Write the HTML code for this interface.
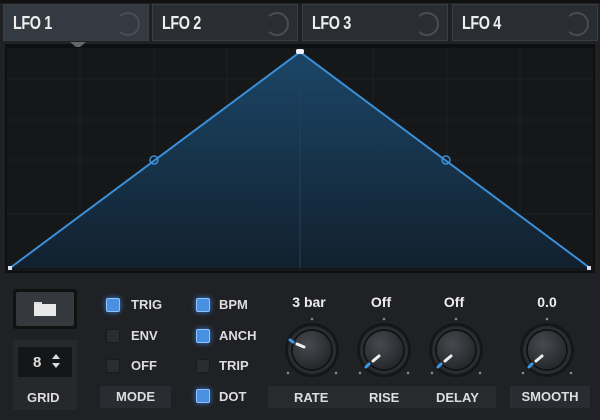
<!DOCTYPE html>
<html><head><style>
body{margin:0;width:600px;height:420px;background:#1f2124;font-family:"Liberation Sans",sans-serif;overflow:hidden;position:relative}
.a{position:absolute}
.tab{position:absolute;top:4px;height:37px;width:146px;background:#2a2d31;border:1px solid #3a3e43;box-sizing:border-box;color:#eee;font-weight:bold;font-size:18px;line-height:36px;padding-left:9px}
.tab span{display:inline-block;transform:scaleX(0.8);transform-origin:left center;letter-spacing:-0.5px}
.tab.on{background:#343a42}
.tab i{position:absolute;right:8px;top:7px;width:20px;height:20px;border:2px solid #4a4e53;border-radius:50%;border-left-color:transparent}
.lbl{position:absolute;color:#ddd;font-weight:bold;font-size:13px}
.box{position:absolute;background:#292c30;color:#ddd;font-weight:bold;font-size:12px;text-align:center;line-height:21px}
.cb{position:absolute;width:14px;height:14px;border-radius:2px}
.cb.on{background:#4a90e0;box-shadow:0 0 6px #3b7fd0;border:1px solid #8fc0ff;box-sizing:border-box}
.cb.off{background:#2a2c2f;border:1px solid #1a1b1d;box-sizing:border-box}
.val{position:absolute;color:#eee;font-weight:bold;font-size:13px;text-align:center;width:60px}
</style></head><body>
<div class="a" style="left:0;top:0;width:600px;height:3px;background:#111"></div>
<div class="tab on" style="left:3px"><span>LFO 1</span><i></i></div>
<div class="tab" style="left:152px"><span>LFO 2</span><i></i></div>
<div class="tab" style="left:302px"><span>LFO 3</span><i></i></div>
<div class="tab" style="left:452px"><span>LFO 4</span><i></i></div>
<svg class="a" style="left:0;top:0" width="600" height="280">
<defs><linearGradient id="g" x1="0" y1="0" x2="0" y2="1"><stop offset="0" stop-color="#1b4668"/><stop offset="1" stop-color="#12202e"/></linearGradient></defs>
<rect x="5" y="44" width="590" height="229" fill="#0e0f11"/>
<rect x="7" y="48" width="586" height="223" fill="#161719"/>
<g stroke="#1d1f22" stroke-width="1">
<line x1="80" y1="48" x2="80" y2="271"/><line x1="154" y1="48" x2="154" y2="271"/><line x1="227" y1="48" x2="227" y2="271"/><line x1="300" y1="48" x2="300" y2="271"/><line x1="373" y1="48" x2="373" y2="271"/><line x1="447" y1="48" x2="447" y2="271"/><line x1="520" y1="48" x2="520" y2="271"/>
<line x1="7" y1="79" x2="593" y2="79"/><line x1="7" y1="120" x2="593" y2="120"/><line x1="7" y1="160" x2="593" y2="160"/><line x1="7" y1="214" x2="593" y2="214"/>
</g>
<polygon points="10,268 300,52 590,268" fill="url(#g)"/>
<line x1="300" y1="52" x2="300" y2="268" stroke="#24405a" stroke-width="1"/>
<polyline points="10,268 300,52 590,268" fill="none" stroke="#3b8fd8" stroke-width="2"/>
<circle cx="154" cy="160" r="4" fill="none" stroke="#3b8fd8" stroke-width="1.5"/>
<circle cx="446" cy="160" r="4" fill="none" stroke="#3b8fd8" stroke-width="1.5"/>
<rect x="296" y="49" width="8" height="5" rx="2" fill="#eef4ff"/>
<rect x="8" y="266" width="4" height="4" fill="#dde"/><rect x="587" y="266" width="4" height="4" fill="#dde"/>
<path d="M70 42 L86 42 L80 47 L76 47 Z" fill="#666"/>
</svg>
<div class="a" style="left:13px;top:289px;width:64px;height:40px;background:#111;border-radius:3px"></div>
<div class="a" style="left:16px;top:292px;width:58px;height:34px;background:#35383c;border-radius:2px"></div>
<div class="a" style="left:34px;top:302px;width:8px;height:3px;background:#ddd"></div>
<div class="a" style="left:34px;top:304px;width:22px;height:12px;background:#e8e8e8"></div>
<div class="a" style="left:13px;top:340px;width:64px;height:70px;background:#26282b"></div>
<div class="a" style="left:18px;top:347px;width:54px;height:30px;background:#151618"></div>
<div class="lbl" style="left:33px;top:354px;font-size:15px">8</div>
<svg class="a" style="left:51px;top:353px" width="10" height="16"><path d="M1 6 L5 1 L9 6Z M1 10 L5 15 L9 10Z" fill="#ddd"/></svg>
<div class="lbl" style="left:27px;top:390px">GRID</div>
<div class="cb on" style="left:106px;top:298px"></div><div class="lbl" style="left:131px;top:297px">TRIG</div>
<div class="cb off" style="left:106px;top:329px"></div><div class="lbl" style="left:131px;top:328px">ENV</div>
<div class="cb off" style="left:106px;top:359px"></div><div class="lbl" style="left:131px;top:358px">OFF</div>
<div class="box" style="left:100px;top:386px;width:71px;height:22px;font-size:13px">MODE</div>
<div class="cb on" style="left:196px;top:298px"></div><div class="lbl" style="left:219px;top:297px">BPM</div>
<div class="cb on" style="left:196px;top:329px"></div><div class="lbl" style="left:219px;top:328px">ANCH</div>
<div class="cb off" style="left:196px;top:359px"></div><div class="lbl" style="left:219px;top:358px">TRIP</div>
<div class="cb on" style="left:196px;top:389px"></div><div class="lbl" style="left:219px;top:389px">DOT</div>
<div class="box" style="left:268px;top:386px;width:228px;height:22px;background:#282b2e"></div>
<div class="lbl" style="left:294px;top:390px">RATE</div>
<div class="lbl" style="left:369px;top:390px">RISE</div>
<div class="lbl" style="left:436px;top:390px">DELAY</div>
<div class="box" style="left:510px;top:386px;width:80px;height:22px;font-size:13px">SMOOTH</div>
<div class="val" style="left:279px;top:294px;font-size:14px">3 bar</div>
<div class="val" style="left:351px;top:294px;font-size:14px">Off</div>
<div class="val" style="left:424px;top:294px;font-size:14px">Off</div>
<div class="val" style="left:517px;top:294px;font-size:14px">0.0</div>
<svg class="a" style="left:270px;top:310px" width="330" height="75">
<defs><radialGradient id="k" cx="0.4" cy="0.35" r="0.7"><stop offset="0" stop-color="#464a4f"/><stop offset="1" stop-color="#222427"/></radialGradient></defs>
<g transform="translate(42,40)"><circle r="27" fill="#151618"/><circle r="24" fill="#2a2c2f"/><circle r="20" fill="url(#k)" stroke="#0e0f10" stroke-width="1.5"/><circle cx="0" cy="-31" r="1.3" fill="#888"/><circle cx="-24" cy="23" r="1.3" fill="#888"/><circle cx="24" cy="23" r="1.3" fill="#888"/><line x1="-15" y1="-6" x2="-8" y2="-3" stroke="#eee" stroke-width="3" stroke-linecap="round"/><line x1="-22" y1="-10" x2="-19" y2="-8" stroke="#3b9be8" stroke-width="3" stroke-linecap="round"/></g>
<g transform="translate(114,40)"><circle r="27" fill="#151618"/><circle r="24" fill="#2a2c2f"/><circle r="20" fill="url(#k)" stroke="#0e0f10" stroke-width="1.5"/><circle cx="0" cy="-31" r="1.3" fill="#888"/><circle cx="-24" cy="23" r="1.3" fill="#888"/><circle cx="24" cy="23" r="1.3" fill="#888"/><line x1="-11" y1="11" x2="-5" y2="6" stroke="#eee" stroke-width="3" stroke-linecap="round"/><line x1="-18" y1="17" x2="-15" y2="14" stroke="#3b9be8" stroke-width="3" stroke-linecap="round"/></g>
<g transform="translate(186,40)"><circle r="27" fill="#151618"/><circle r="24" fill="#2a2c2f"/><circle r="20" fill="url(#k)" stroke="#0e0f10" stroke-width="1.5"/><circle cx="0" cy="-31" r="1.3" fill="#888"/><circle cx="-24" cy="23" r="1.3" fill="#888"/><circle cx="24" cy="23" r="1.3" fill="#888"/><line x1="-11" y1="11" x2="-5" y2="6" stroke="#eee" stroke-width="3" stroke-linecap="round"/><line x1="-18" y1="17" x2="-15" y2="14" stroke="#3b9be8" stroke-width="3" stroke-linecap="round"/></g>
<g transform="translate(277,40)"><circle r="27" fill="#151618"/><circle r="24" fill="#2a2c2f"/><circle r="20" fill="url(#k)" stroke="#0e0f10" stroke-width="1.5"/><circle cx="0" cy="-31" r="1.3" fill="#888"/><circle cx="-24" cy="23" r="1.3" fill="#888"/><circle cx="24" cy="23" r="1.3" fill="#888"/><line x1="-11" y1="11" x2="-5" y2="6" stroke="#eee" stroke-width="3" stroke-linecap="round"/><line x1="-18" y1="17" x2="-15" y2="14" stroke="#3b9be8" stroke-width="3" stroke-linecap="round"/></g>
</svg>
</body></html>
